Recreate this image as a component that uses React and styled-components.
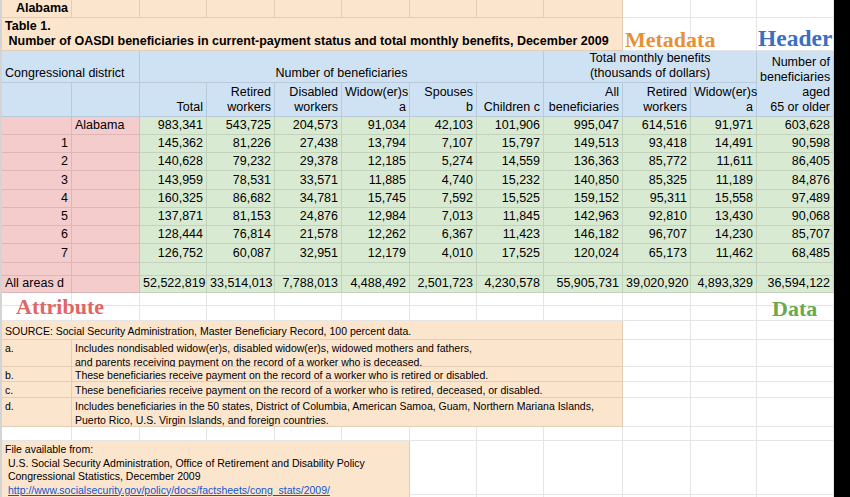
import React from "react";
import styled, { createGlobalStyle } from "styled-components";

const GlobalStyle = createGlobalStyle`
  html, body {
    margin: 0;
    padding: 0;
    background: #000;
  }
  body {
    font-family: "Liberation Sans", Arial, sans-serif;
    color: #000;
  }
`;

const fills = {
  meta: "#fce5cd",
  head: "#cfe2f3",
  attr: "#f4cccc",
  data: "#d9ead3",
  blank: "#ffffff",
};

const Window = styled.div`
  width: 850px;
  height: 497px;
  overflow: hidden;
  background: #000;
`;

const Frame = styled.div`
  position: relative;
  width: 834px;
  height: 497px;
  overflow: hidden;
  background: #fff;
`;

// 12 spreadsheet columns A..L, rows sized like the sheet
const Sheet = styled.div`
  display: grid;
  grid-template-columns: 70px 68px 67px 68px 67px 68px 67px 67px 79px 68px 66px 77px;
  grid-template-rows:
    18px 33px 32px 34px
    18px 18px 18px 19px 18px 18px 18px 19px
    13px 17px 13px 15px
    19px 27px 15px 16px 29px 14px 54px 20px;
  border-left: 2px solid #d4d4d4;
`;

const Cell = styled.div`
  grid-column: span ${(p) => p.$span || 1};
  grid-row: span ${(p) => p.$rows || 1};
  box-sizing: border-box;
  min-width: 0;
  display: flex;
  flex-direction: column;
  justify-content: ${(p) => (p.$top ? "flex-start" : "flex-end")};
  padding: ${(p) => (p.$top ? "2px 3px 0" : "0 3px 1px")};
  background: ${(p) => fills[p.$fill || "blank"]};
  border-right: 1px solid rgba(0, 0, 0, 0.1);
  border-bottom: 1px solid rgba(0, 0, 0, 0.1);
  font-size: ${(p) => (p.$small ? "10.5px" : "12.5px")};
  line-height: ${(p) => (p.$small ? "13.5px" : "15px")};
  font-weight: ${(p) => (p.$bold ? 700 : 400)};
  text-align: ${(p) => p.$align || "left"};
  white-space: pre;
`;

const SourceLink = styled.a`
  color: #1155cc;
  text-decoration: underline;
  padding-left: 3px;
`;

// the coloured annotation words laid over the sheet
const Tag = styled.span`
  position: absolute;
  left: ${(p) => p.$x}px;
  top: ${(p) => p.$y}px;
  font-family: "Liberation Serif", "Times New Roman", serif;
  font-weight: 700;
  font-size: ${(p) => p.$size || 22}px;
  line-height: 1;
  color: ${(p) => p.$color};
  pointer-events: none;
`;

const subHeads = [
  "Total",
  "Retired\nworkers",
  "Disabled\nworkers",
  "Widow(er)s\na",
  "Spouses\nb",
  "Children c",
  "All\nbeneficiaries",
  "Retired\nworkers",
  "Widow(er)s\na",
];

const rows = [
  ["", "Alabama", ["983,341", "543,725", "204,573", "91,034", "42,103", "101,906", "995,047", "614,516", "91,971", "603,628"]],
  ["1", "", ["145,362", "81,226", "27,438", "13,794", "7,107", "15,797", "149,513", "93,418", "14,491", "90,598"]],
  ["2", "", ["140,628", "79,232", "29,378", "12,185", "5,274", "14,559", "136,363", "85,772", "11,611", "86,405"]],
  ["3", "", ["143,959", "78,531", "33,571", "11,885", "4,740", "15,232", "140,850", "85,325", "11,189", "84,876"]],
  ["4", "", ["160,325", "86,682", "34,781", "15,745", "7,592", "15,525", "159,152", "95,311", "15,558", "97,489"]],
  ["5", "", ["137,871", "81,153", "24,876", "12,984", "7,013", "11,845", "142,963", "92,810", "13,430", "90,068"]],
  ["6", "", ["128,444", "76,814", "21,578", "12,262", "6,367", "11,423", "146,182", "96,707", "14,230", "85,707"]],
  ["7", "", ["126,752", "60,087", "32,951", "12,179", "4,010", "17,525", "120,024", "65,173", "11,462", "68,485"]],
];

const totals = ["52,522,819", "33,514,013", "7,788,013", "4,488,492", "2,501,723", "4,230,578", "55,905,731", "39,020,920", "4,893,329", "36,594,122"];

const notes = [
  ["a.", "Includes nondisabled widow(er)s, disabled widow(er)s, widowed mothers and fathers,\nand parents receiving payment on the record of a worker who is deceased."],
  ["b.", "These beneficiaries receive payment on the record of a worker who is retired or disabled."],
  ["c.", "These beneficiaries receive payment on the record of a worker who is retired, deceased, or disabled."],
  ["d.", "Includes beneficiaries in the 50 states, District of Columbia, American Samoa, Guam, Northern Mariana Islands,\nPuerto Rico, U.S. Virgin Islands, and foreign countries."],
];

const blanks = (n, fill, key) =>
  Array.from({ length: n }, (_, i) => <Cell key={`${key}-${i}`} $fill={fill} />);

const App = () => {
  return (
    <Window>
      <GlobalStyle />
      <Frame>
        <Sheet>
          {/* metadata */}
          <Cell $fill="meta" $align="right" $bold>Alabama</Cell>
          {blanks(8, "meta", "r1")}
          {blanks(3, "blank", "r1w")}

          <Cell $fill="meta" $span={9} $bold>
            {"Table 1.\n Number of OASDI beneficiaries in current-payment status and total monthly benefits, December 2009"}
          </Cell>
          {blanks(3, "blank", "r2w")}

          {/* header */}
          <Cell $fill="head" $span={2}>Congressional district</Cell>
          <Cell $fill="head" $span={6} $align="center">Number of beneficiaries</Cell>
          <Cell $fill="head" $span={3} $align="center">
            {"Total monthly benefits\n(thousands of dollars)"}
          </Cell>
          <Cell $fill="head" $rows={2} $align="right">
            {"Number of\nbeneficiaries\naged\n65 or older"}
          </Cell>
          {blanks(2, "head", "r4")}
          {subHeads.map((h, i) => (
            <Cell key={`h${i}`} $fill="head" $align="right">{h}</Cell>
          ))}

          {/* attributes + data */}
          {rows.map(([num, name, vals], r) => (
            <React.Fragment key={`d${r}`}>
              <Cell $fill="attr" $align="right">{num}</Cell>
              <Cell $fill="attr">{name}</Cell>
              {vals.map((v, i) => (
                <Cell key={i} $fill="data" $align="right">{v}</Cell>
              ))}
            </React.Fragment>
          ))}
          {blanks(2, "attr", "gap")}
          {blanks(10, "data", "gapd")}
          <Cell $fill="attr">All areas d</Cell>
          <Cell $fill="attr" />
          {totals.map((v, i) => (
            <Cell key={`t${i}`} $fill="data" $align="right">{v}</Cell>
          ))}

          {blanks(12, "blank", "e1")}
          {blanks(12, "blank", "e2")}

          {/* footnotes */}
          <Cell $fill="meta" $span={9} $small>
            SOURCE: Social Security Administration, Master Beneficiary Record, 100 percent data.
          </Cell>
          {blanks(3, "blank", "srcw")}
          {notes.map(([mark, text]) => (
            <React.Fragment key={mark}>
              <Cell $fill="meta" $small $top>{mark}</Cell>
              <Cell $fill="meta" $span={8} $small $top>{text}</Cell>
              {blanks(3, "blank", `n${mark}`)}
            </React.Fragment>
          ))}
          {blanks(12, "blank", "e3")}

          <Cell $fill="meta" $span={6} $rows={2} $small $top>
            {"File available from:\n U.S. Social Security Administration, Office of Retirement and Disability Policy\n Congressional Statistics, December 2009"}
            <SourceLink href="#">http://www.socialsecurity.gov/policy/docs/factsheets/cong_stats/2009/</SourceLink>
          </Cell>
          {blanks(6, "blank", "f1")}
          {blanks(6, "blank", "f2")}
        </Sheet>

        <Tag $x={625} $y={29} $color="#e69138">Metadata</Tag>
        <Tag $x={758} $y={27} $size={23.5} $color="#3c6fc4">Header</Tag>
        <Tag $x={16} $y={296} $color="#e06666">Attribute</Tag>
        <Tag $x={772} $y={298} $color="#6aa84f">Data</Tag>
      </Frame>
    </Window>
  );
};

export default App;
